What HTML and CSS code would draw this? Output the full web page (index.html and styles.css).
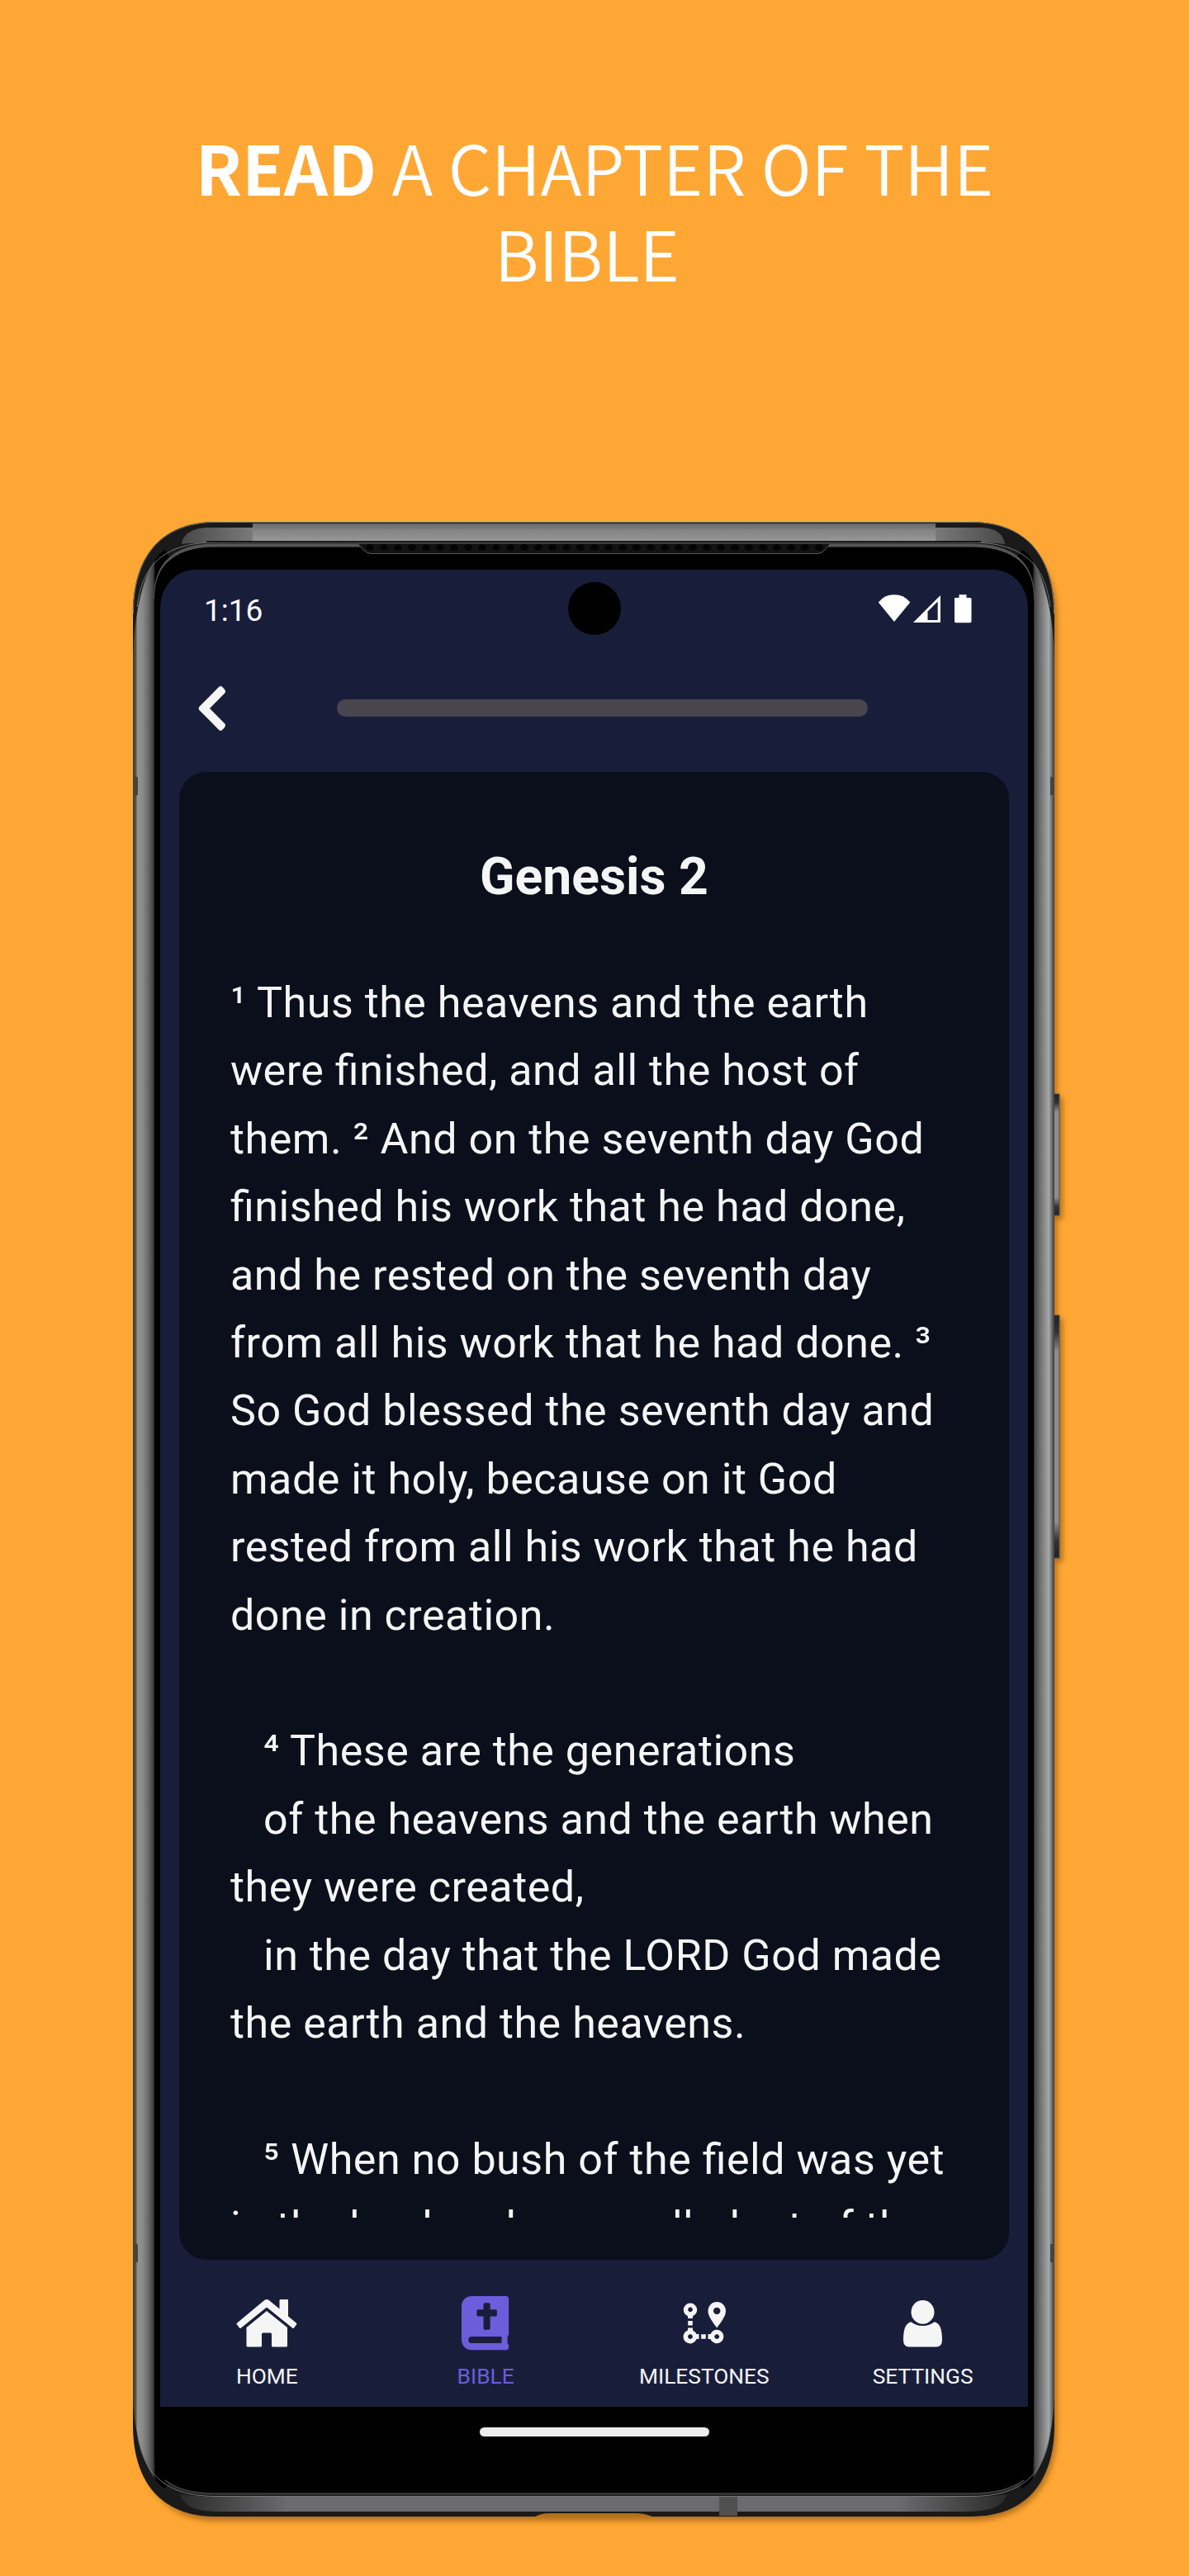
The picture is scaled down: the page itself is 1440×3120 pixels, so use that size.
FILE: index.html
```html
<!DOCTYPE html>
<html lang="en">
<head>
<meta charset="utf-8">
<title>Read a chapter of the Bible</title>
<link rel="stylesheet" href="styles.css">
</head>
<body>
<h1 class="headline"><strong>READ</strong> A CHAPTER OF THE<br>BIBLE&nbsp;</h1>

<main class="phone">
  <svg class="frame" viewBox="151 622 1150 2450" aria-hidden="true">
    <defs>
      <linearGradient id="side" gradientUnits="userSpaceOnUse" x1="161" x2="1277" y1="0" y2="0">
        <stop offset="0" stop-color="#3c3c3c"/><stop offset=".003" stop-color="#505050"/>
        <stop offset=".005" stop-color="#949494"/><stop offset=".0105" stop-color="#8a8a8a"/>
        <stop offset=".017" stop-color="#676767"/><stop offset=".022" stop-color="#404040"/><stop offset=".0245" stop-color="#000"/>
        <stop offset=".976" stop-color="#000"/><stop offset=".979" stop-color="#4a4a4a"/><stop offset=".985" stop-color="#737373"/>
        <stop offset=".992" stop-color="#9b9b9b"/><stop offset=".994" stop-color="#a8a8a8"/>
        <stop offset=".997" stop-color="#6f6f6f"/><stop offset="1" stop-color="#3a3a3a"/>
      </linearGradient>
      <linearGradient id="top" x1="0" x2="0" y1="0" y2="1">
        <stop offset="0" stop-color="#666"/><stop offset=".4" stop-color="#858585"/><stop offset="1" stop-color="#979797"/>
      </linearGradient>
      <linearGradient id="cornerL" x1="0" x2="1" y1="0" y2="0">
        <stop offset="0" stop-color="#484848"/><stop offset="1" stop-color="#7a7a7a"/>
      </linearGradient>
      <linearGradient id="cornerR" x1="1" x2="0" y1="0" y2="0">
        <stop offset="0" stop-color="#484848"/><stop offset="1" stop-color="#7a7a7a"/>
      </linearGradient>
      <linearGradient id="bottom" x1="0" x2="1" y1="0" y2="0">
        <stop offset="0" stop-color="#2a2a2a"/><stop offset=".13" stop-color="#6b6b6d"/>
        <stop offset=".87" stop-color="#6b6b6d"/><stop offset="1" stop-color="#2a2a2a"/>
      </linearGradient>
      <linearGradient id="key" x1="0" x2="0" y1="0" y2="1">
        <stop offset="0" stop-color="#222"/><stop offset=".07" stop-color="#333"/><stop offset=".15" stop-color="#8e8e8e"/>
        <stop offset=".85" stop-color="#8e8e8e"/><stop offset=".93" stop-color="#333"/><stop offset="1" stop-color="#222"/>
      </linearGradient>
      <pattern id="mesh" width="17" height="14" patternUnits="userSpaceOnUse" x="440" y="657">
        <rect width="17" height="14" fill="#121212"/><ellipse cx="8" cy="6" rx="5" ry="4" fill="#040404"/>
      </pattern>
      <filter id="soft" x="-5%" y="-5%" width="110%" height="110%"><feGaussianBlur stdDeviation="3.5"/></filter>
    </defs>

    <g fill="#7c4a08" opacity=".6" filter="url(#soft)">
      <path d="M168 750C168 690 200 645 270 645H1175C1250 645 1280 690 1280 750V2940C1280 3015 1240 3053 1175 3053H262C200 3053 168 3010 168 2940Z"/>
      <rect x="1272" y="1329" width="15" height="148"/>
      <rect x="1272" y="1597" width="15" height="295"/>
    </g>
    <g stroke="#555">
      <rect x="1274" y="1325" width="9" height="147" fill="url(#key)"/>
      <rect x="1274" y="1593" width="9" height="294" fill="url(#key)"/>
    </g>

    <!-- chassis -->
    <path fill="#1a1a1a" d="M161 743C161 680 190 632 262 632H1176C1248 632 1277 680 1277 743V2937C1277 3000 1248 3048 1176 3048H790Q780 3044 770 3044H665Q656 3044 648 3048H262C190 3048 161 3000 161 2937Z"/>
    <path fill="none" stroke="#7c7466" stroke-width="1" d="M161.500 743C161.500 680 190 632.500 262 632.500H1176C1248 632.500 1276.500 680 1276.500 743"/>
    <path fill="url(#side)" d="M161 800C162 730 180 676 200 666L235 720H1203L1238 666C1258 676 1276 730 1277 800V2900C1276 2960 1256 3005 1238 3014L1203 2960H235L200 3014C182 3005 162 2960 161 2900Z"/>

    <!-- top and bottom rails -->
    <rect x="306" y="634" width="827" height="22" fill="url(#top)"/>
    <path fill="url(#cornerL)" d="M306 639H250C232 640 221 648 220 659Q245 656 306 656Z"/>
    <path fill="url(#cornerR)" d="M1133 639H1189C1207 640 1216 648 1217 659Q1193 656 1133 656Z"/>
    <path fill="url(#bottom)" d="M218 3021Q236 3024 262 3024H1176Q1203 3024 1219 3021C1214 3038 1198 3041 1172 3042H262C238 3041 223 3037 218 3021Z"/>
    <rect x="871" y="3024" width="22" height="23" fill="#505050"/>

    <!-- glass -->
    <path fill="#000" stroke="#555" stroke-width="4" d="M188 725C188 685 208 660.500 262 660.500H1176C1230 660.500 1251 685 1251 725"/>
    <path fill="#000" d="M187 725C187 685 210 663 262 663H1176C1230 663 1252 685 1252 725V2975C1252 3003 1230 3019 1176 3019H262C208 3019 187 3003 187 2975Z"/>
    <path fill="none" stroke="#3c3c3c" stroke-width="2" d="M200 3004Q220 3020.500 262 3020.500H1176Q1218 3020.500 1240 3004"/>
    <path fill="none" stroke="#777" stroke-width="1" d="M166 735C172 690 192 657 262 657H1176C1246 657 1266 690 1272 735M166 2945C172 2990 194 3023.500 262 3023.500H1176C1244 3023.500 1266 2990 1272 2945"/>
    <path fill="url(#mesh)" stroke="#555" d="M433 658L440 666Q444 670.500 450 670.500H990Q996 670.500 1000 665L1006 658Z"/>
    <path stroke="#000" stroke-width="1.500" d="M250 656H1188"/>
    <path fill="#444" d="M162 941h5v22h-5zM1272 941h5v22h-5zM162 2718h5v22h-5zM1272 2718h5v22h-5z"/>
  </svg>

  <section class="screen">
    <div class="camera"></div>
    <div class="status">
      <span class="time">1:16</span>
      <svg width="115" height="36" viewBox="0 0 115 36" fill="#fff">
        <path d="M.8 10.500Q8 1.200 20 1.200T39.300 10.500L20 34Z"/>
        <path fill-rule="evenodd" d="M43 35L76 2V35ZM60.500 32H72.700V9.500L60.500 21.500Z"/>
        <path d="M93 6Q93 5 94 5H98.500V1.200H107.500V5H112Q113.500 5 113.500 6.500V33.500Q113.500 35.200 112 35.200H94.500Q93 35.200 93 33.500Z"/>
      </svg>
    </div>
    <header class="toolbar">
      <svg width="34" height="56" viewBox="0 0 34 56" fill="#f5f5f5"><path d="M25.300 1.800Q27.300 .2 29.300 2L32 5Q34 7.500 32 9.700L14 28L32 46.300Q34 48.500 32 51L29.300 54Q27.300 55.800 25.300 54.200L1.500 30.200Q-.3 28 1.500 25.800Z"/></svg>
      <div class="progress"></div>
    </header>
    <article class="card">
      <h2>Genesis 2</h2>
      <div class="scripture">
        <p><span>¹ Thus the heavens and the earth</span><span>were finished, and all the host of</span><span>them. ² And on the seventh day God</span><span>finished his work that he had done,</span><span>and he rested on the seventh day</span><span>from all his work that he had done. ³</span><span>So God blessed the seventh day and</span><span>made it holy, because on it God</span><span>rested from all his work that he had</span><span>done in creation.</span></p>
        <p><span class="indent">⁴ These are the generations</span><span class="indent">of the heavens and the earth when</span><span>they were created,</span><span class="indent">in the day that the LORD God made</span><span>the earth and the heavens.</span></p>
        <p><span class="indent">⁵ When no bush of the field was yet</span><span>in the land and no small plant of the</span></p>
      </div>
    </article>
    <nav class="tabs">
      <a class="tab">
        <svg viewBox="0 0 80 66"><path d="M40 4Q42 4 44 6L55.500 15.500V5Q55.500 4 56.500 4H65Q66 4 66 5V24.500L75.800 32.500Q76.800 33.500 76 34.500L73 38.500Q72 39.500 71 38.500L40 13.500L9 38.500Q8 39.500 7 38.500L4 34.500Q3.200 33.500 4.200 32.500L36 6Q38 4 40 4Z"/><path d="M40 18L65 38V60Q65 61.500 63.500 61.500H47.500Q46 61.500 46 60V46Q46 44.500 44.500 44.500H35.500Q34 44.500 34 46V60Q34 61.500 32.500 61.500H17Q15.500 61.500 15.500 60V38Z"/></svg>
        HOME
      </a>
      <a class="tab active">
        <svg viewBox="0 0 80 66"><path transform="translate(11 0) scale(.1275 .1275)" d="M448 358.400V25.600c0-16-9.600-25.600-25.600-25.600H96C41.600 0 0 41.600 0 96v320c0 54.400 41.600 96 96 96h326.400c12.800 0 25.600-9.600 25.600-25.600v-16c0-6.400-3.200-12.800-9.600-19.200-3.200-16-3.200-60.800 0-73.600 6.400-3.200 9.600-9.600 9.600-19.200zM144 144c0-8.840 7.160-16 16-16h48V80c0-8.840 7.160-16 16-16h32c8.840 0 16 7.160 16 16v48h48c8.840 0 16 7.160 16 16v32c0 8.840-7.160 16-16 16h-48v112c0 8.840-7.160 16-16 16h-32c-8.840 0-16-7.160-16-16V192h-48c-8.840 0-16-7.160-16-16v-32zm236.800 304H96c-19.200 0-32-12.800-32-32s16-32 32-32h284.800v64z"/></svg>
        BIBLE
      </a>
      <a class="tab">
        <svg viewBox="0 0 80 66"><path fill-rule="evenodd" d="M23 8.500A8.200 8.200 0 0 1 31.200 16.700Q31.200 21.500 26 24.300V27H20V24.300Q14.800 21.500 14.800 16.700A8.200 8.200 0 0 1 23 8.500ZM23 13.600a2.800 2.800 0 1 0 .01 0ZM20.200 30h5.600v5.500h-5.600ZM20 38.500h6V41.500Q29.500 43 30.500 46H33.500V52H30.500A8.200 8.200 0 1 1 20 41.500ZM23 46.200a2.900 2.900 0 1 0 .01 0ZM36.200 46.200h5.600v5.600h-5.600ZM44.500 46H47.500A8.200 8.200 0 1 1 47.500 52H44.500ZM55.200 46.200a2.900 2.900 0 1 0 .01 0ZM55.200 7A10.800 10.800 0 0 1 66 18C66 25 59 33 55.200 38.500C51.500 33 44.500 25 44.500 18A10.800 10.800 0 0 1 55.200 7ZM55.200 13.700a4.200 4.200 0 1 0 .01 0Z"/></svg>
        MILESTONES
      </a>
      <a class="tab">
        <svg viewBox="0 0 80 66"><ellipse cx="39.500" cy="19.400" rx="14" ry="14.300"/><path d="M25.500 31.300Q31 36 39.500 36T53.500 31.300Q63 33 63 53Q63 61.500 56 61.500H23Q16 61.500 16 53Q16 33 25.500 31.300Z"/></svg>
        SETTINGS
      </a>
    </nav>
  </section>
  <div class="homebar"></div>
</main>
</body>
</html>
```

FILE: styles.css
```css
* { box-sizing: border-box; }

body {
  margin: 0;
  width: 1440px;
  height: 3120px;
  background: #ffa735;
  font-family: Roboto, sans-serif;
  overflow: hidden;
}

.headline {
  margin: 0;
  height: 632px;
  padding-top: 150px;
  color: #fff;
  font: 350 82.700px/103.700px "Noto Sans CJK JP", sans-serif;
  text-align: center;
}
.headline strong { font-weight: 700; }

.phone {
  position: relative;
  width: 1116px;
  height: 2416px;
  margin-left: 161px;
  padding: 58px 32px 0 33px;
  display: flex;
  flex-direction: column;
}
.frame {
  position: absolute;
  left: -10px;
  top: -10px;
  width: 1150px;
  height: 2450px;
}

.screen {
  position: relative;
  height: 2225px;
  flex: none;
  display: flex;
  flex-direction: column;
  background: #181e3a;
  border-radius: 42px 42px 0 0 / 46px 46px 0 0;
}
.camera {
  position: absolute;
  left: 494px;
  top: 15px;
  width: 64px;
  height: 64px;
  border-radius: 50%;
  background: #000;
}

.status {
  height: 110px;
  padding: 29px 67px 0 53px;
  display: flex;
  justify-content: space-between;
  align-items: flex-start;
}
.time {
  margin-top: 2px;
  color: #fff;
  font-size: 37px;
  line-height: 37px;
}

.toolbar {
  height: 115px;
  margin-bottom: 20px;
  padding-left: 46px;
  display: flex;
  align-items: center;
  gap: 134px;
}
.progress {
  width: 643px;
  height: 21px;
  border-radius: 10.500px;
  background: #49454f;
}

.card {
  height: 1802px;
  flex: none;
  margin: 0 23px;
  padding: 90px 20px 0 62px;
  border-radius: 33px;
  background: #0b0e1b;
  color: #f5f5f5;
}
.card h2 {
  margin: 0 42px 75px 0;
  font-size: 62.400px;
  line-height: 74px;
  font-weight: 700;
  text-align: center;
}
.scripture {
  height: 1512px;
  overflow: hidden;
  font-size: 52px;
  line-height: 82.400px;
  letter-spacing: 0.520px;
  font-feature-settings: "liga" 1;
  white-space: nowrap;
}
.scripture p { margin: 0 0 82.400px; }
.scripture span { display: block; }
.scripture .indent { padding-left: 40px; }

.tabs {
  width: 1059px;
  margin-left: -3px;
  padding-top: 44px;
  display: grid;
  grid-template-columns: repeat(4, 1fr);
}
.tab {
  display: flex;
  flex-direction: column;
  align-items: center;
  gap: 15px;
  color: #f5f5f5;
  font-size: 26.300px;
  line-height: 32px;
}
.tab svg {
  width: 80px;
  height: 66px;
  fill: currentColor;
}
.tab.active { color: #6a5edb; }

.homebar {
  position: relative;
  width: 278px;
  height: 11px;
  margin: 25px auto 0;
  border-radius: 6px;
  background: #ececec;
}
```
